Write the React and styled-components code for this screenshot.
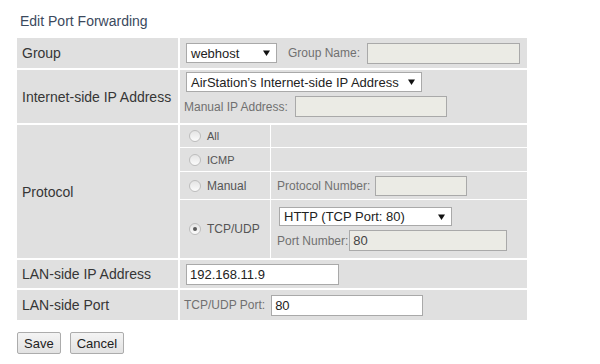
import React from 'react';
import styled, { createGlobalStyle } from 'styled-components';

const Global = createGlobalStyle`
  html, body { margin: 0; padding: 0; background: #ffffff; }
  body { font-family: "Liberation Sans", Arial, sans-serif; color: #333; }
  *, *::before, *::after { box-sizing: border-box; }
`;

const Page = styled.div`
  padding: 12px 0 0 17px;
`;

const Title = styled.h1`
  margin: 0 0 8px 3px;
  height: 18px;
  font-size: 14px;
  line-height: 18px;
  font-weight: normal;
  color: #3b495d;
`;

const FormTable = styled.table`
  width: 510px;
  border-collapse: separate;
  border-spacing: 0;
  background: #e0e0e0;
`;

const HeadCell = styled.th`
  width: 163px;
  height: ${p => (p.$h ? `${p.$h}px` : 'auto')};
  padding: 0 0 0 5px;
  border-right: 2px solid #fff;
  border-bottom: ${p => (p.$last ? 0 : 2)}px solid #fff;
  text-align: left;
  vertical-align: middle;
  font-weight: normal;
  font-size: 14px;
  color: #363636;
`;

const FieldCell = styled.td`
  height: ${p => (p.$h ? `${p.$h}px` : 'auto')};
  padding: ${p => (p.$flush ? '0' : p.$top ? '2px 5px 0 5px' : '0 5px')};
  border-bottom: ${p => (p.$last ? 0 : 2)}px solid #fff;
  vertical-align: ${p => (p.$top ? 'top' : 'middle')};
`;

const SubTable = styled.table`
  width: 100%;
  border-collapse: separate;
  border-spacing: 0;
`;

const RadioCell = styled.td`
  width: 91px;
  height: ${p => p.$h}px;
  padding: 0 0 0 9px;
  border-right: 1px solid #fff;
  border-bottom: ${p => (p.$last ? 0 : 1)}px solid #fff;
  vertical-align: middle;
`;

const OptionCell = styled.td`
  height: ${p => p.$h}px;
  padding: 0 6px;
  border-bottom: ${p => (p.$last ? 0 : 1)}px solid #fff;
  vertical-align: middle;
`;

const Line = styled.div`
  display: flex;
  align-items: center;
`;

const Stack = styled.div`
  display: flex;
  flex-direction: column;
  align-items: flex-start;
  gap: 4px;
`;

const FieldLabel = styled.span`
  font-size: ${p => p.$size || 12}px;
  color: #707070;
  margin-left: ${p => p.$ml || 0}px;
  margin-right: ${p => (p.$mr != null ? p.$mr : 3)}px;
  white-space: nowrap;
`;

const SelectBox = styled.div`
  display: inline-flex;
  align-items: center;
  justify-content: space-between;
  width: ${p => p.$w}px;
  height: ${p => p.$hgt || 20}px;
  margin-left: ${p => p.$ml || 0}px;
  padding: 0 6px 0 4px;
  background: #fff;
  border: 1px solid #a9a9a9;
  font-size: 13px;
  color: #222;
  white-space: nowrap;
`;

const TextBox = styled.input`
  width: ${p => p.$w}px;
  height: ${p => p.$hgt || 21}px;
  margin: 0 0 0 ${p => p.$ml || 0}px;
  padding: 0 3px;
  border: 1px solid #a9a9a9;
  background: ${p => (p.disabled ? '#ebebe5' : '#fff')};
  font-family: "Liberation Sans", Arial, sans-serif;
  font-size: 13px;
  color: #222;
  outline: none;
  &:disabled { color: #444; }
`;

const RadioOption = styled.label`
  display: flex;
  align-items: center;
  gap: 6px;
  font-size: ${p => p.$size}px;
  color: #555;
`;

const RadioDot = styled.span`
  display: inline-block;
  position: relative;
  width: 12px;
  height: 12px;
  border-radius: 50%;
  border: 1px solid #bdbdbd;
  background: linear-gradient(#e4e4e4, #fbfbfb);
  &::after {
    content: '';
    display: ${p => (p.$checked ? 'block' : 'none')};
    position: absolute;
    left: 3px;
    top: 3px;
    width: 4px;
    height: 4px;
    border-radius: 50%;
    background: #5a5a5a;
  }
`;

const Buttons = styled.div`
  display: flex;
  gap: 9px;
  margin-top: 12px;
`;

const Button = styled.button`
  height: 22px;
  padding: 0 6px;
  border: 1px solid #acacac;
  border-radius: 2px;
  background: linear-gradient(#f4f4f4, #e2e2e2);
  font-family: "Liberation Sans", Arial, sans-serif;
  font-size: 13px;
  color: #222;
`;

const Arrow = () => (
  <svg width="7" height="6" viewBox="0 0 7 6" aria-hidden="true">
    <polygon points="0,0.5 7,0.5 3.5,6" fill="#111" />
  </svg>
);

const Select = ({ w, hgt, ml, children }) => (
  <SelectBox $w={w} $hgt={hgt} $ml={ml} role="combobox">
    <span>{children}</span>
    <Arrow />
  </SelectBox>
);

const Radio = ({ checked, size, children }) => (
  <RadioOption $size={size}>
    <RadioDot $checked={checked} />
    {children}
  </RadioOption>
);

export default function App() {
  return (
    <>
      <Global />
      <Page>
        <Title>Edit Port Forwarding</Title>
        <FormTable>
          <tbody>
            <tr>
              <HeadCell $h={32}>Group</HeadCell>
              <FieldCell $h={32}>
                <Line>
                  <Select w={91} ml={1}>webhost</Select>
                  <FieldLabel $ml={11} $mr={7}>Group Name:</FieldLabel>
                  <TextBox $w={153} disabled defaultValue="" />
                </Line>
              </FieldCell>
            </tr>
            <tr>
              <HeadCell $h={55}>Internet-side IP Address</HeadCell>
              <FieldCell $h={55} $top>
                <Stack>
                  <Select w={236} ml={1}>AirStation’s Internet-side IP Address</Select>
                  <Line>
                    <FieldLabel $ml={-1} $mr={7}>Manual IP Address:</FieldLabel>
                    <TextBox $w={152} disabled defaultValue="" />
                  </Line>
                </Stack>
              </FieldCell>
            </tr>
            <tr>
              <HeadCell>Protocol</HeadCell>
              <FieldCell $flush>
                <SubTable>
                  <tbody>
                    <tr>
                      <RadioCell $h={23}><Radio size={11}>All</Radio></RadioCell>
                      <OptionCell $h={23} />
                    </tr>
                    <tr>
                      <RadioCell $h={24}><Radio size={11}>ICMP</Radio></RadioCell>
                      <OptionCell $h={24} />
                    </tr>
                    <tr>
                      <RadioCell $h={28}><Radio size={12}>Manual</Radio></RadioCell>
                      <OptionCell $h={28}>
                        <Line>
                          <FieldLabel $mr={5}>Protocol Number:</FieldLabel>
                          <TextBox $w={92} $hgt={20} disabled defaultValue="" />
                        </Line>
                      </OptionCell>
                    </tr>
                    <tr>
                      <RadioCell $h={58} $last><Radio size={12} checked>TCP/UDP</Radio></RadioCell>
                      <OptionCell $h={58} $last>
                        <Stack>
                          <Select w={173} hgt={19} ml={2}>HTTP (TCP Port: 80)</Select>
                          <Line>
                            <FieldLabel $mr={1}>Port Number:</FieldLabel>
                            <TextBox $w={158} disabled defaultValue="80" />
                          </Line>
                        </Stack>
                      </OptionCell>
                    </tr>
                  </tbody>
                </SubTable>
              </FieldCell>
            </tr>
            <tr>
              <HeadCell $h={30}>LAN-side IP Address</HeadCell>
              <FieldCell $h={30}>
                <TextBox $w={153} $ml={1} defaultValue="192.168.11.9" />
              </FieldCell>
            </tr>
            <tr>
              <HeadCell $h={30} $last>LAN-side Port</HeadCell>
              <FieldCell $h={30} $last>
                <Line>
                  <FieldLabel $ml={-1} $mr={6}>TCP/UDP Port:</FieldLabel>
                  <TextBox $w={152} defaultValue="80" />
                </Line>
              </FieldCell>
            </tr>
          </tbody>
        </FormTable>
        <Buttons>
          <Button type="button">Save</Button>
          <Button type="button">Cancel</Button>
        </Buttons>
      </Page>
    </>
  );
}
